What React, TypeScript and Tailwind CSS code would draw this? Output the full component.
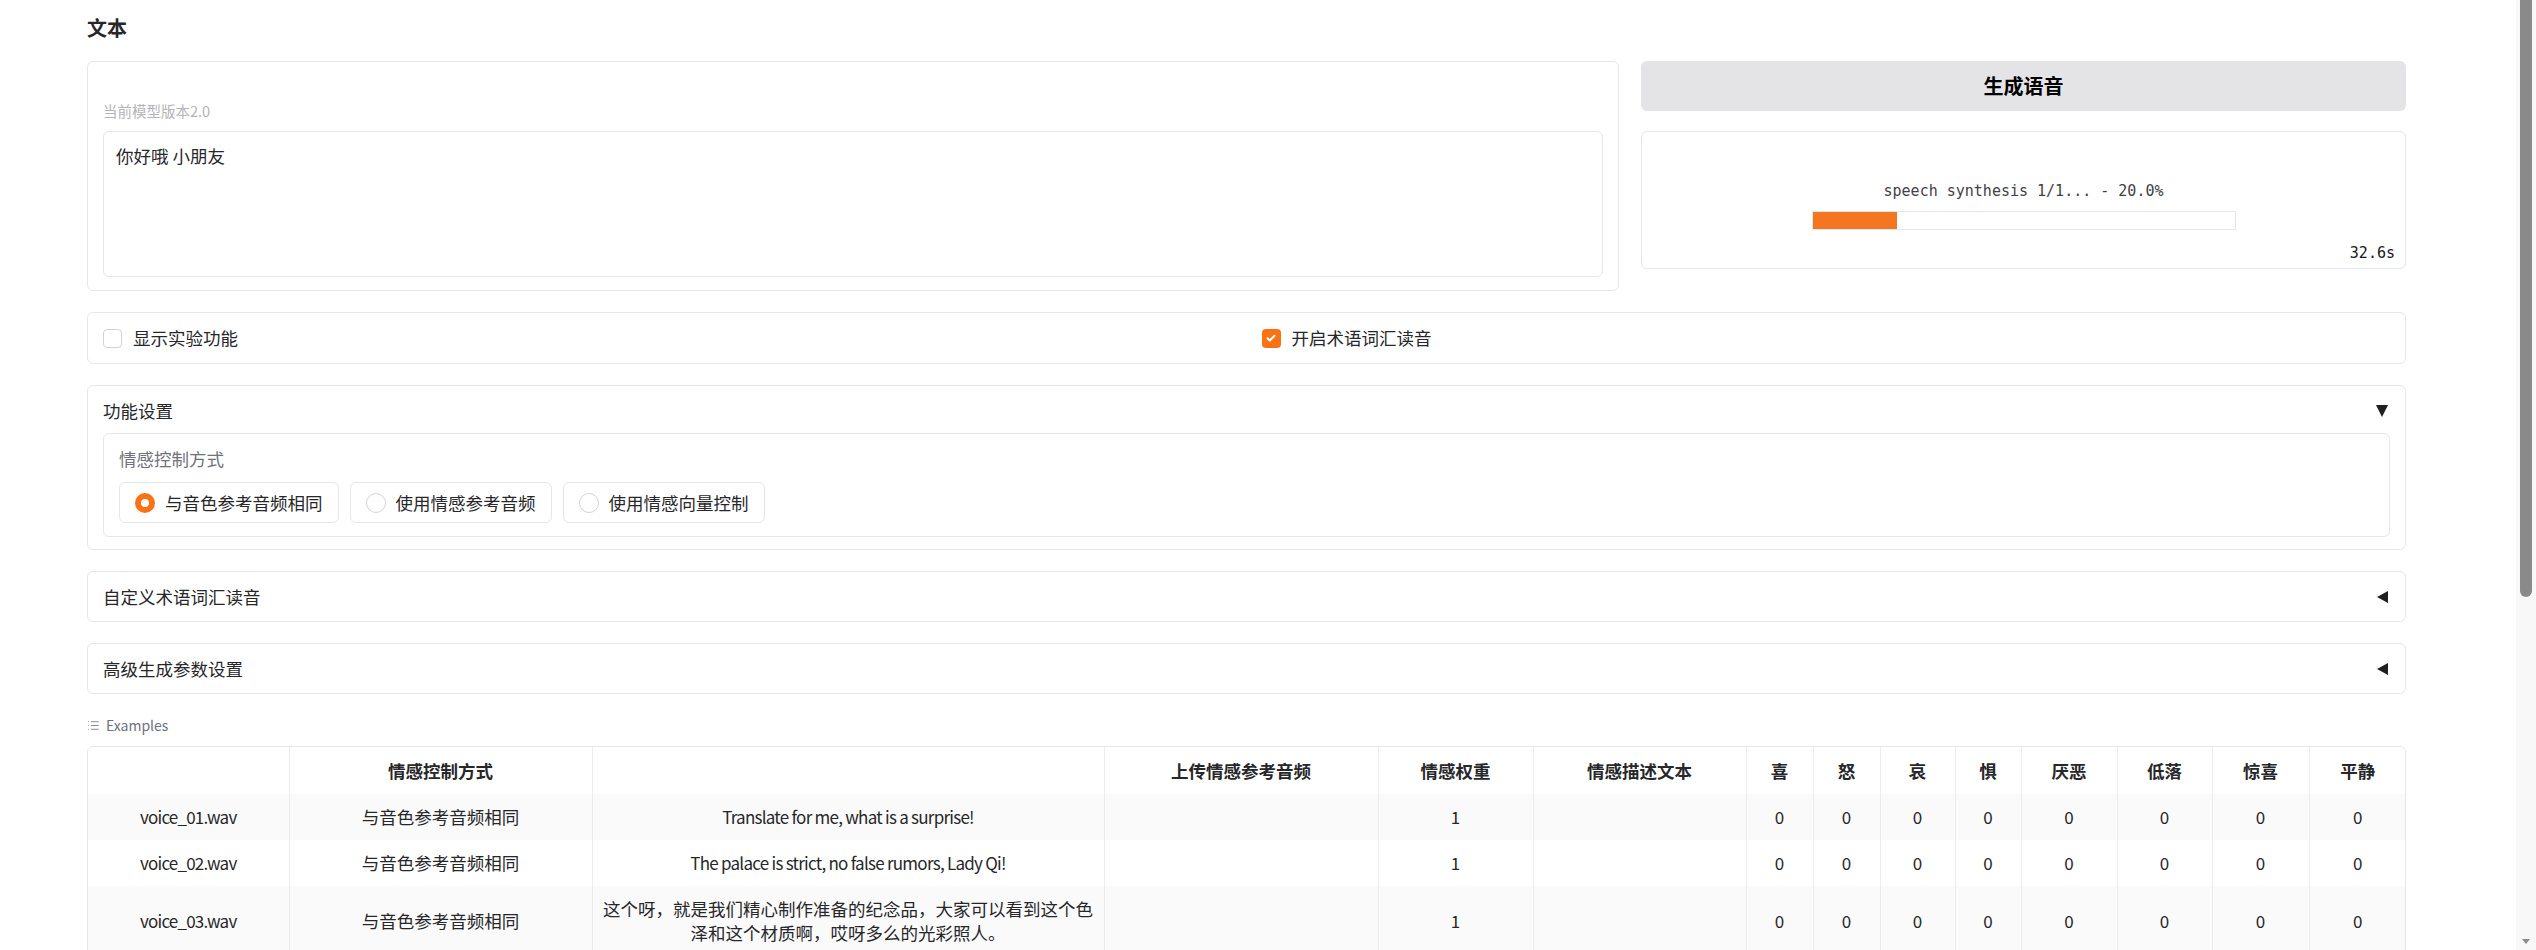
import { List } from "lucide-react";

type Row = {
  file: string;
  mode: string;
  text: string;
  latin: boolean;
  weight: string;
};

const COLS = [201, 303, 512, 274, 155, 213, 67, 67, 75, 66, 96, 95, 97, 97];
const HEADERS = ["", "情感控制方式", "", "上传情感参考音频", "情感权重", "情感描述文本", "喜", "怒", "哀", "惧", "厌恶", "低落", "惊喜", "平静"];

const ROWS: Row[] = [
  { file: "voice_01.wav", mode: "与音色参考音频相同", text: "Translate for me, what is a surprise!", latin: true, weight: "1" },
  { file: "voice_02.wav", mode: "与音色参考音频相同", text: "The palace is strict, no false rumors, Lady Qi!", latin: true, weight: "1" },
  {
    file: "voice_03.wav",
    mode: "与音色参考音频相同",
    text: "这个呀，就是我们精心制作准备的纪念品，大家可以看到这个色泽和这个材质啊，哎呀多么的光彩照人。",
    latin: false,
    weight: "1",
  },
];

function Checkbox({ checked, label }: { checked?: boolean; label: string }) {
  return (
    <label className="flex items-center gap-[11px]">
      {checked ? (
        <span className="flex h-[19px] w-[19px] items-center justify-center rounded-[4px] bg-[#f97316]">
          <svg width="12" height="12" viewBox="0 0 12 12" fill="none">
            <path d="M2.5 6.2l2.3 2.3 4.7-4.8" stroke="white" strokeWidth="2" strokeLinecap="round" strokeLinejoin="round" />
          </svg>
        </span>
      ) : (
        <span className="h-[19px] w-[19px] rounded-[4px] border border-[#d4d4d8] bg-white" />
      )}
      <span className="text-[17.5px] leading-[24px]">{label}</span>
    </label>
  );
}

function Radio({ checked, label }: { checked?: boolean; label: string }) {
  return (
    <div className="flex h-[41px] items-center gap-[10px] rounded-md border border-[#e5e7eb] bg-white pl-[15px] pr-[15px]">
      {checked ? (
        <span className="h-[20px] w-[20px] rounded-full border-[6px] border-[#f97316] bg-white" />
      ) : (
        <span className="h-[20px] w-[20px] rounded-full border border-[#d4d4d8] bg-white" />
      )}
      <span className="text-[17.5px] leading-[24px]">{label}</span>
    </div>
  );
}

function Caret({ open }: { open?: boolean }) {
  return (
    <svg width="12" height="12" viewBox="0 0 12 12">
      {open ? <polygon points="0,0 12,0 6,12" fill="#1f1f1f" /> : <polygon points="12,0 12,12 1,6" fill="#1f1f1f" />}
    </svg>
  );
}

function Accordion({ title }: { title: string }) {
  return (
    <div className="flex h-[51px] items-center justify-between rounded-md border border-[#e5e7eb] pl-[15px] pr-[17px]">
      <span className="text-[17.5px] leading-[24px]">{title}</span>
      <Caret />
    </div>
  );
}

function ExamplesTable() {
  return (
    <div className="overflow-hidden rounded-md border border-[#e5e7eb]">
      <table className="w-full table-fixed border-collapse text-center text-[17.5px] leading-[24px]">
        <colgroup>
          {COLS.map((w, i) => (
            <col key={i} style={{ width: w }} />
          ))}
        </colgroup>
        <thead className="shadow-[0_2px_3px_rgba(0,0,0,0.08)]">
          <tr className="h-[47px] bg-white">
            {HEADERS.map((h, i) => (
              <th key={i} className="border-r border-[#ececec] px-[6px] font-bold last:border-r-0">
                {h}
              </th>
            ))}
          </tr>
        </thead>
        <tbody>
          {ROWS.map((r, i) => (
            <tr key={r.file} className={i % 2 === 0 ? "bg-[#fafafa]" : "bg-white"}>
              <td className="h-[46px] border-r border-[#ececec] px-[8px] py-[11px] text-[17px] tracking-[-0.8px]">{r.file}</td>
              <td className="border-r border-[#ececec] px-[6px]">{r.mode}</td>
              <td className={`border-r border-[#ececec] px-[8px] py-[11px] ${r.latin ? "text-[17px] tracking-[-0.75px]" : ""}`}>
                {r.text}
              </td>
              <td className="border-r border-[#ececec]" />
              <td className="border-r border-[#ececec] text-[17px]">{r.weight}</td>
              <td className="border-r border-[#ececec]" />
              {Array.from({ length: 8 }).map((_, j) => (
                <td key={j} className="border-r border-[#ececec] text-[17px] last:border-r-0">
                  0
                </td>
              ))}
            </tr>
          ))}
        </tbody>
      </table>
    </div>
  );
}

export default function App() {
  return (
    <div className="flex h-[950px] overflow-hidden bg-white font-['Noto_Sans_CJK_SC',sans-serif] text-[#27272a]">
      <div className="flex-1 overflow-hidden">
        <div className="ml-[87px] w-[2319px] pt-[14px]">
          <h2 className="text-[20px] font-bold leading-[28px]">文本</h2>

          <div className="mt-[19px] flex flex-col gap-[21px]">
            <div className="flex gap-[22px]">
              <div className="flex h-[230px] w-[1532px] flex-col rounded-md border border-[#e5e7eb] px-[15px] pb-[13px] pt-[39px]">
                <span className="text-[14.5px] leading-[20px] text-[#b4b4b8]">当前模型版本2.0</span>
                <div className="mt-[10px] flex-1 rounded-md border border-[#e5e7eb] px-[12px] py-[12px] text-[17.5px] leading-[24px]">
                  你好哦 小朋友
                </div>
              </div>

              <div className="flex flex-1 flex-col gap-[20px]">
                <button className="h-[50px] rounded-md bg-[#e4e4e7] text-[20px] font-bold text-black">生成语音</button>
                <div className="flex h-[138px] flex-col items-center rounded-md border border-[#e5e7eb] pt-[49px] font-['DejaVu_Sans_Mono',monospace]">
                  <span className="text-[15px] leading-[20px] text-[#3f3f46]">speech synthesis 1/1... - 20.0%</span>
                  <div className="mt-[10px] h-[19px] w-[424px] border border-[#e5e7eb] bg-white">
                    <div className="h-full bg-[#f47620]" style={{ width: "20%" }} />
                  </div>
                  <span className="mt-[13px] self-end pr-[10px] text-[15px] leading-[20px] text-[#18181b]">32.6s</span>
                </div>
              </div>
            </div>

            <div className="grid h-[52px] grid-cols-2 items-center rounded-md border border-[#e5e7eb]">
              <div className="px-[15px]">
                <Checkbox label="显示实验功能" />
              </div>
              <div className="px-[15px]">
                <Checkbox checked label="开启术语词汇读音" />
              </div>
            </div>

            <div className="rounded-md border border-[#e5e7eb] px-[15px] pb-[12px] pt-[13px]">
              <div className="flex items-center justify-between pr-[2px]">
                <span className="text-[17.5px] leading-[24px]">功能设置</span>
                <Caret open />
              </div>
              <div className="mt-[10px] rounded-md border border-[#e5e7eb] px-[15px] pb-[13px] pt-[13px]">
                <span className="block text-[17.5px] leading-[24px] text-[#71717a]">情感控制方式</span>
                <div className="mt-[11px] flex gap-[11px]">
                  <Radio checked label="与音色参考音频相同" />
                  <Radio label="使用情感参考音频" />
                  <Radio label="使用情感向量控制" />
                </div>
              </div>
            </div>

            <Accordion title="自定义术语词汇读音" />
            <Accordion title="高级生成参数设置" />
          </div>

          <div className="mt-[21px] flex items-center gap-[6px] text-[#6b7280]">
            <List size={13} strokeWidth={1.5} />
            <span className="text-[14px] leading-[20px]">Examples</span>
          </div>
          <div className="mt-[11px]">
            <ExamplesTable />
          </div>
        </div>
      </div>

      <div className="flex w-[20px] flex-col items-center bg-[#f8f8f8]">
        <div className="h-[597px] w-[12px] rounded-b-full bg-[#8a8a8a]" />
        <div className="mt-auto mb-[6px]">
          <svg width="8" height="5" viewBox="0 0 8 5">
            <polygon points="0,0 8,0 4,5" fill="#8a8a8a" />
          </svg>
        </div>
      </div>
    </div>
  );
}
